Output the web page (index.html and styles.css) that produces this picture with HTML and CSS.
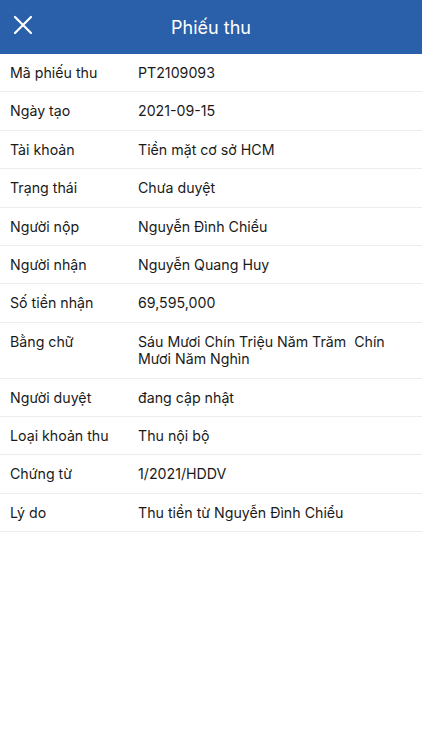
FILE: index.html
```html
<!DOCTYPE html>
<html lang="vi">
<head>
    <meta charset="UTF-8">
    <meta name="viewport" content="width=device-width, initial-scale=1.0">
    <title>Phiếu thu</title>
    <link rel="stylesheet" href="styles.css">
</head>
<body>
    <header class="topbar">
        <button class="close-btn" aria-label="Đóng">
            <svg width="20" height="20" viewBox="0 0 20 20">
                <path d="M2 2 L18 18 M18 2 L2 18" stroke="#fff" stroke-width="2.2" stroke-linecap="round" fill="none"/>
            </svg>
        </button>
        <h1>Phiếu thu</h1>
    </header>

    <div class="detail-list">
        <div class="row"><div class="label">Mã phiếu thu</div><div class="value">PT2109093</div></div>
        <div class="row"><div class="label">Ngày tạo</div><div class="value">2021-09-15</div></div>
        <div class="row"><div class="label">Tài khoản</div><div class="value">Tiền mặt cơ sở HCM</div></div>
        <div class="row"><div class="label">Trạng thái</div><div class="value">Chưa duyệt</div></div>
        <div class="row"><div class="label">Người nộp</div><div class="value">Nguyễn Đình Chiểu</div></div>
        <div class="row"><div class="label">Người nhận</div><div class="value">Nguyễn Quang Huy</div></div>
        <div class="row"><div class="label">Số tiền nhận</div><div class="value">69,595,000</div></div>
        <div class="row"><div class="label">Bằng chữ</div><div class="value">Sáu Mươi Chín Triệu Năm Trăm&nbsp; Chín Mươi Năm Nghìn</div></div>
        <div class="row"><div class="label">Người duyệt</div><div class="value">đang cập nhật</div></div>
        <div class="row"><div class="label">Loại khoản thu</div><div class="value">Thu nội bộ</div></div>
        <div class="row"><div class="label">Chứng từ</div><div class="value">1/2021/HDDV</div></div>
        <div class="row"><div class="label">Lý do</div><div class="value">Thu tiền từ Nguyễn Đình Chiểu</div></div>
    </div>
</body>
</html>
```

FILE: styles.css
```css
body {
    margin: 0;
    font-family: Inter, Roboto, "Noto Sans", sans-serif;
    background: #fff;
    color: #1a1a1a;
}
.topbar {
    height: 54px;
    background-color: #2a5faa;
    display: flex;
    align-items: center;
    justify-content: center;
    position: relative;
}
.topbar h1 {
    margin: 0;
    color: #fff;
    font-size: 18px;
    font-weight: 400;
}
.close-btn {
    position: absolute;
    left: 13px;
    top: 15px;
    padding: 0;
    border: none;
    background: none;
    width: 20px;
    height: 20px;
}
.row {
    display: flex;
    padding: 10px 10px;
    border-bottom: 1px solid #ececec;
    font-size: 14.2px;
    line-height: 17.4px;
}
.label {
    width: 128px;
    flex-shrink: 0;
}
.value {
    flex: 1;
    padding-right: 20px;
}
```
